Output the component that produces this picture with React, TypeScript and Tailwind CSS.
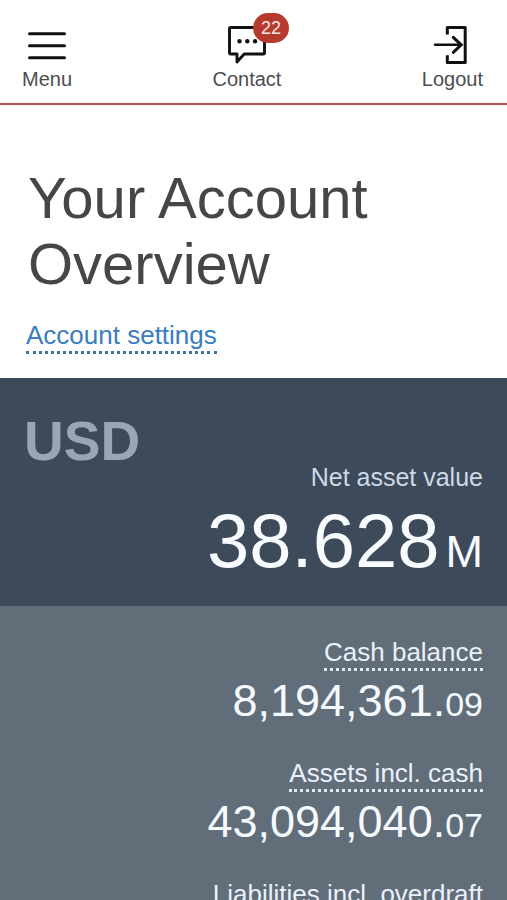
import React from 'react';

const balances = [
  { label: 'Cash balance', whole: '8,194,361.', decimals: '09' },
  { label: 'Assets incl. cash', whole: '43,094,040.', decimals: '07' },
  { label: 'Liabilities incl. overdraft', whole: '', decimals: '' },
];

const MenuIcon = () => (
  <svg className="h-10 w-10" viewBox="0 0 40 40" fill="none" stroke="#101014" strokeWidth="3" strokeLinecap="round" aria-hidden="true">
    <path d="M2.5 9.7h35M2.5 21.7h35M2.5 33.7h35" />
  </svg>
);

const ContactIcon = () => (
  <svg className="h-10 w-10" viewBox="0 0 40 40" fill="none" stroke="#101014" strokeWidth="2.9" strokeLinejoin="round" aria-hidden="true">
    <path d="M3.8 3.5h32.4q1.3 0 1.3 1.3v23.9q0 1.3-1.3 1.3H17.2L10 38v-8H3.8q-1.3 0-1.3-1.3V4.8q0-1.3 1.3-1.3z" />
    <g fill="#101014" stroke="none">
      <circle cx="12.5" cy="17.3" r="2.2" />
      <circle cx="20.3" cy="17.3" r="2.2" />
      <circle cx="28.1" cy="17.3" r="2.2" />
    </g>
  </svg>
);

const LogoutIcon = () => (
  <svg className="h-10 w-10" viewBox="0 0 40 40" fill="none" stroke="#101014" strokeWidth="3" aria-hidden="true">
    <path d="M15.3 10.5V3.5h17.9v35H15.3v-7.3" strokeLinejoin="round" />
    <path d="M3 20.8h26" strokeWidth="2.4" strokeLinecap="round" />
    <path d="M21.3 13.3l7.9 7.5-7.9 7.5" strokeLinecap="round" />
  </svg>
);

const App: React.FC = () => {
  return (
    <div className="h-screen overflow-hidden bg-white font-['Liberation_Sans',Arial,sans-serif]">
      <header className="flex items-start justify-between border-b-2 border-[#b5504f] pt-6 pr-6 pb-3 pl-[22px] text-[20px] leading-6 text-[#4c4d50]">
        <button type="button" className="flex flex-col items-center gap-[3px]">
          <MenuIcon />
          Menu
        </button>
        <button type="button" className="flex flex-col items-center gap-[3px]">
          <span className="relative">
            <ContactIcon />
            <span className="absolute -top-[11px] left-[26px] flex h-[30px] w-9 items-center justify-center rounded-full bg-[#b73a2f] text-[18px] text-[#fbe9e8]">
              22
            </span>
          </span>
          Contact
        </button>
        <button type="button" className="flex flex-col items-center gap-[3px]">
          <LogoutIcon />
          Logout
        </button>
      </header>

      <main>
        <section className="px-[26px] pt-[60px] pb-6">
          <h1 className="pl-0.5 text-[58px] leading-[66px] text-[#444648]">
            Your Account
            <br />
            Overview
          </h1>
          <a
            href="#settings"
            className="mt-[23px] inline-block border-b-3 border-dotted border-[#3b74ad] pb-px align-top text-[26px] leading-[30px] text-[#3a7dbf]"
          >
            Account settings
          </a>
        </section>

        <section className="bg-[#3c4a59] px-6 pt-[43px] pb-[27px]">
          <h2 className="text-[55px] leading-10 font-bold text-[#9ba6b4]">USD</h2>
          <p className="mt-px text-right text-[25px] leading-[30px] text-[#cfd9e5]">Net asset value</p>
          <p className="mt-[11px] flex items-baseline justify-end gap-[6px] text-[76px] leading-[76px] text-[#f8fcff]">
            38.628
            <span className="text-[45px] leading-none">M</span>
          </p>
        </section>

        <section className="flex flex-col gap-[33px] bg-[#626d7a] px-6 pt-[31px] pb-8 text-[#f5faff]">
          {balances.map((item) => (
            <div key={item.label} className="flex flex-col items-end">
              <a
                href="#details"
                className="border-b-3 border-dotted border-[#dfe8f3] pb-px text-[26px] leading-[30px] text-[#e9f1fb]"
              >
                {item.label}
              </a>
              {item.whole && (
                <p className="mt-[6px] text-[45px] leading-[48px]">
                  {item.whole}
                  <span className="text-[34px] leading-none">{item.decimals}</span>
                </p>
              )}
            </div>
          ))}
        </section>
      </main>
    </div>
  );
};

export default App;
